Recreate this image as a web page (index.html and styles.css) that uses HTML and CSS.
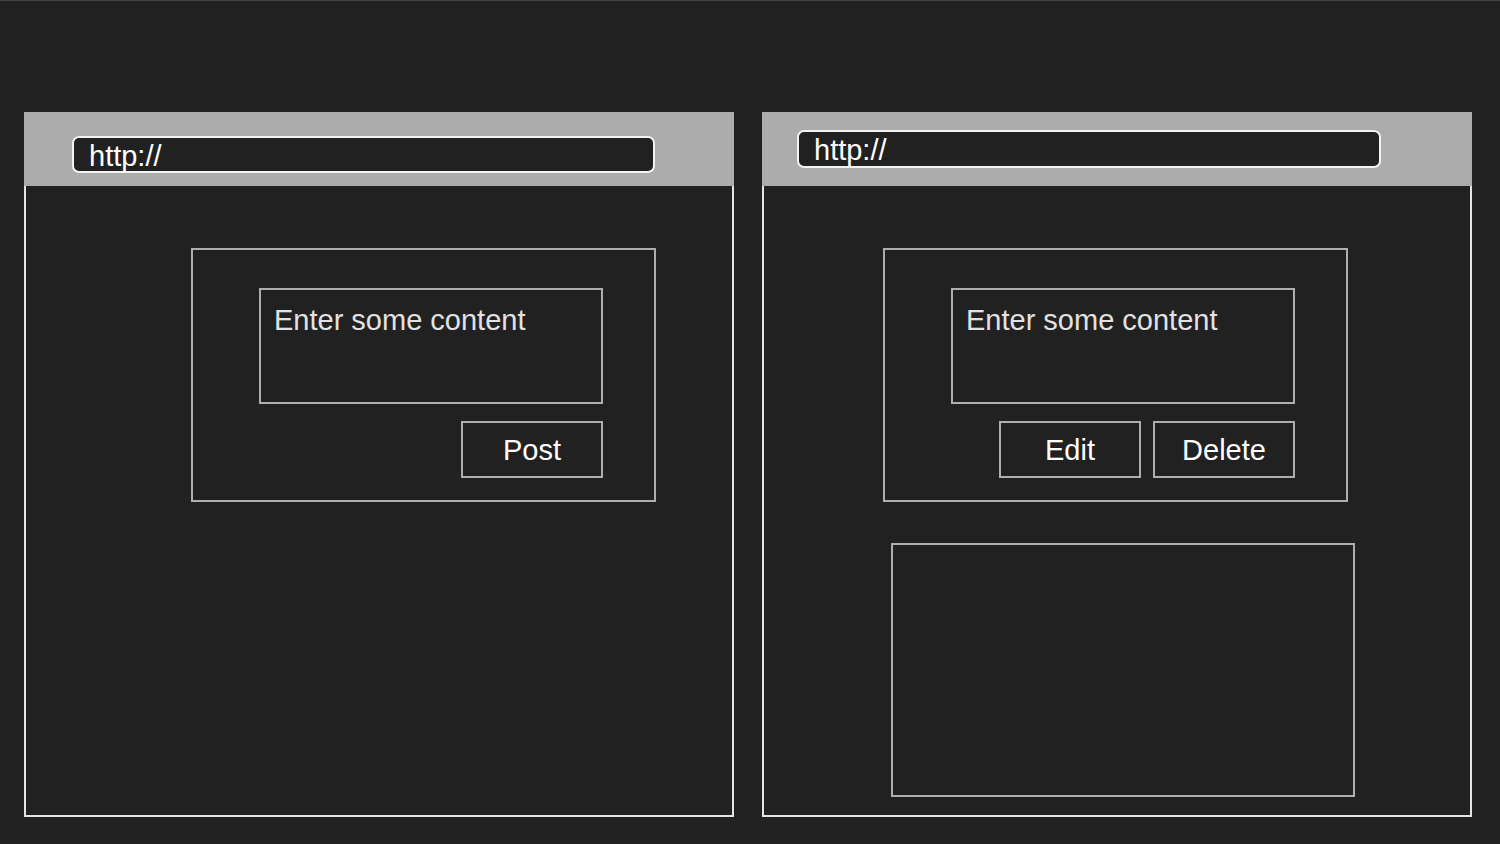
FILE: index.html
```html
<!DOCTYPE html>
<html lang="en">
<head>
    <meta charset="UTF-8">
    <title>Post flow wireframe</title>
    <link rel="stylesheet" href="styles.css">
</head>
<body>
    <div class="stage">
        <!-- Before: new post -->
        <div class="window window-left">
            <div class="chrome">
                <div class="url-bar">http://</div>
            </div>
            <div class="viewport">
                <div class="panel">
                    <div class="textbox">Enter some content</div>
                    <div class="actions">
                        <div class="btn">Post</div>
                    </div>
                </div>
            </div>
        </div>

        <!-- After: posted content -->
        <div class="window window-right">
            <div class="chrome">
                <div class="url-bar">http://</div>
            </div>
            <div class="viewport">
                <div class="panel">
                    <div class="textbox">Enter some content</div>
                    <div class="actions">
                        <div class="btn">Edit</div>
                        <div class="btn">Delete</div>
                    </div>
                </div>
                <div class="result"></div>
            </div>
        </div>
    </div>
</body>
</html>
```

FILE: styles.css
```css
* {
    margin: 0;
    padding: 0;
    box-sizing: border-box;
}

body {
    background: #212121;
    color: #ffffff;
    font-family: 'Liberation Sans', Arial, sans-serif;
    height: 844px;
    overflow: hidden;
    border-top: 1px solid #444444;
}

.stage {
    display: flex;
    gap: 28px;
    padding: 111px 0 0 24px;
}

.window {
    width: 710px;
    height: 705px;
    display: flex;
    flex-direction: column;
}

/* Grey browser bar */
.chrome {
    height: 74px;
    background: #acacac;
    flex-shrink: 0;
}

.url-bar {
    background: #212121;
    border: 2px solid #f2f2f2;
    border-radius: 7px;
    font-size: 29px;
    line-height: 33px;
    padding: 2px 0 0 15px;
    color: #ffffff;
}

.window-left .chrome {
    padding: 24px 0 0 48px;
}

.window-left .url-bar {
    width: 583px;
    height: 37px;
}

.window-right .chrome {
    padding: 18px 0 0 35px;
}

.window-right .url-bar {
    width: 584px;
    height: 38px;
}

.viewport {
    flex: 1;
    border: 2px solid #e4e4e4;
    border-top: none;
    padding-top: 62px;
    display: flex;
    flex-direction: column;
    gap: 41px;
}

.window-left .viewport {
    padding-left: 165px;
}

.window-right .viewport {
    padding-left: 119px;
}

.panel {
    width: 465px;
    height: 254px;
    border: 2px solid #aeaeae;
    padding: 38px 51px 0 66px;
    display: flex;
    flex-direction: column;
    gap: 17px;
}

.textbox {
    height: 116px;
    border: 2px solid #aeaeae;
    padding: 14px 0 0 13px;
    font-size: 29px;
    line-height: 33px;
    color: #e2e2e2;
}

.actions {
    display: flex;
    justify-content: flex-end;
    gap: 12px;
}

.btn {
    width: 142px;
    height: 57px;
    border: 2px solid #aeaeae;
    display: flex;
    align-items: center;
    justify-content: center;
    padding-top: 2px;
    font-size: 29px;
    color: #ffffff;
}

.result {
    width: 464px;
    height: 254px;
    margin-left: 8px;
    border: 2px solid #aeaeae;
}
```
